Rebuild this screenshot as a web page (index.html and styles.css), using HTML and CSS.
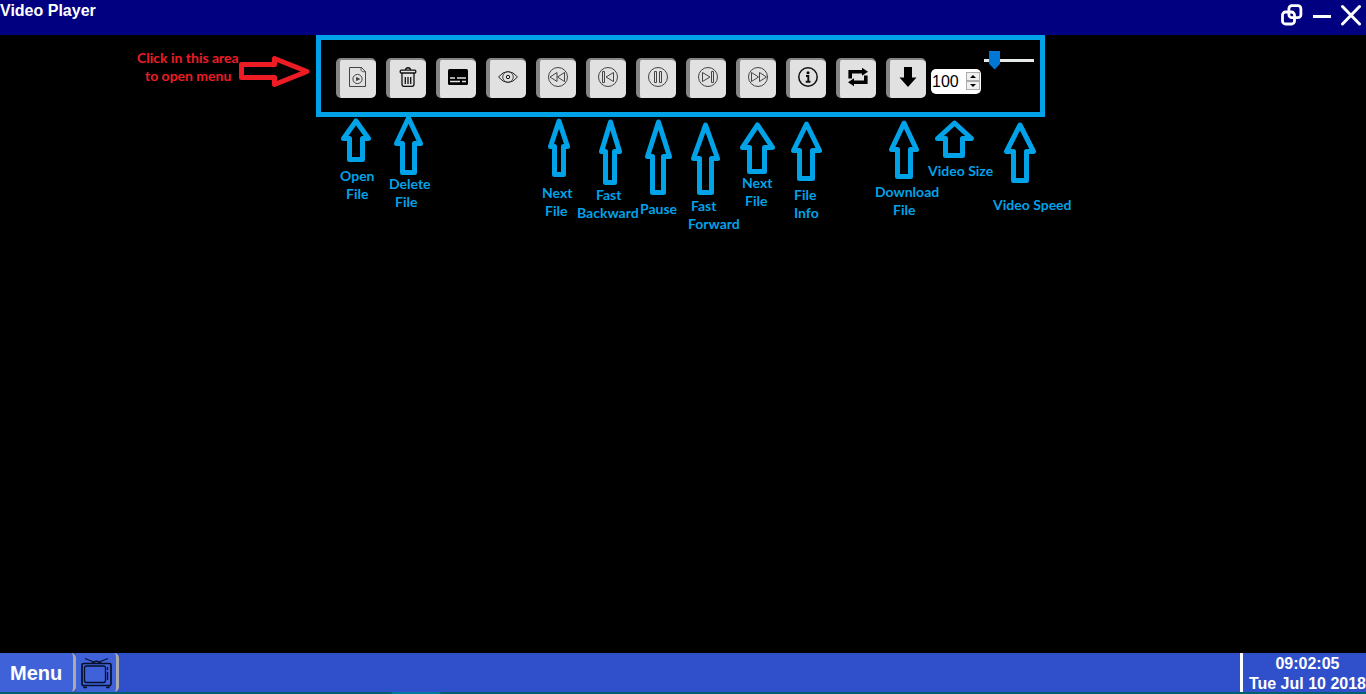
FILE: index.html
```html
<!DOCTYPE html>
<html lang="en">
<head>
<meta charset="utf-8">
<title>Video Player</title>
<link rel="stylesheet" href="styles.css">
</head>
<body>
<header class="titlebar">
  <h1 class="title">Video Player</h1>
  <div class="window-controls">
    <button class="window-button" aria-label="Restore"><svg width="22" height="22" viewBox="0 0 22 22" fill="none" stroke="#fff" stroke-width="2.8"><rect x="7.900" y="1.700" width="12" height="12" rx="3"/><rect x="1.500" y="8" width="12" height="12" rx="3"/></svg></button>
    <button class="window-button" aria-label="Minimize"><svg width="18" height="22" viewBox="0 0 18 22"><path d="M0 12.5h18" stroke="#fff" stroke-width="3"/></svg></button>
    <button class="window-button" aria-label="Close"><svg width="20" height="22" viewBox="0 0 20 22"><path d="M1.500 2.500 18.500 20M18.500 2.500 1.500 20" stroke="#fff" stroke-width="3" stroke-linecap="round"/></svg></button>
  </div>
</header>

<main class="stage">
  <div class="panel">
    <div class="toolbar">
      <div class="tools">
        <button class="tool" aria-label="Open file"><svg class="icon" viewBox="0 0 20 20"><path d="M1.500.5h12l4 4v15h-16zM13.500.5c-1.500 3 .5 5 4 4"/><circle cx="9.500" cy="12" r="4.600"/><path d="M8.500 10.500l3 1.500-3 1.500z" fill="#444"/></svg></button>
        <button class="tool" aria-label="Delete file"><svg class="icon dark" viewBox="0 0 20 20"><rect x="2.200" y="3.200" width="15.600" height="2.800" rx="1"/><path d="M7.500 3c0-3 5-3 5 0M4 6v11q0 2.300 2 2.300h8q2 0 2-2.300V6M7.300 10v7M10 10v7M12.700 10v7"/></svg></button>
        <button class="tool" aria-label="Subtitles"><svg class="icon" viewBox="0 0 20 20"><rect x="0" y="2" width="20" height="16" rx="1.500" fill="#000" stroke="none"/><path d="M2 11h5M9 11h9M2 14.500h10M14 14.500h4" stroke="#e1e1e1" stroke-width="1.700"/></svg></button>
        <button class="tool" aria-label="View"><svg class="icon" viewBox="0 0 20 20"><path d="M.5 10Q5 4.500 10 4.500T19.500 10Q15 15.500 10 15.500T.5 10z" stroke="#222"/><circle cx="10" cy="10" r="5.300"/><circle cx="10" cy="10" r="1.700" stroke="#111"/></svg></button>
        <button class="tool" aria-label="Previous file"><svg class="icon" viewBox="0 0 20 20"><circle cx="10" cy="10" r="9.500"/><path d="M9 5.500v9L2 10zM16.500 5.500v9L9.500 10z"/></svg></button>
        <button class="tool" aria-label="Fast backward"><svg class="icon" viewBox="0 0 20 20"><circle cx="10" cy="10" r="9.500"/><path d="M4.500 4.500h2v11h-2zM15.500 5.500v9L8 10z"/></svg></button>
        <button class="tool" aria-label="Pause"><svg class="icon" viewBox="0 0 20 20"><circle cx="10" cy="10" r="9.500"/><path d="M6.500 4.500h2v11h-2zM11.500 4.500h2v11h-2z"/></svg></button>
        <button class="tool" aria-label="Fast forward"><svg class="icon" viewBox="0 0 20 20"><circle cx="10" cy="10" r="9.500"/><path d="M13.500 4.500h2v11h-2zM4.500 5.500v9L12 10z"/></svg></button>
        <button class="tool" aria-label="Next file"><svg class="icon" viewBox="0 0 20 20"><circle cx="10" cy="10" r="9.500"/><path d="M3.500 5.500v9l7-4.500zM11.500 5.500v9l7-4.500z"/></svg></button>
        <button class="tool" aria-label="File info"><svg class="icon dark" viewBox="0 0 20 20"><circle cx="10" cy="10" r="9.200" stroke-width="1.500"/><path d="M8 9h2.300v5.500M7.700 14.700h4.800" stroke-width="1.900"/><circle cx="10" cy="5.700" r="1.500" fill="#000" stroke="none"/></svg></button>
        <button class="tool" aria-label="Repeat"><svg class="icon" viewBox="0 0 20 20"><path d="M2.200 11.500V4.700H15M17.800 8.500v6.800H5" fill="none" stroke="#000" stroke-width="3.600"/><path d="M14 .7l6 4-6 4zM6 11.300l-6 4 6 4z" fill="#000" stroke="none"/></svg></button>
        <button class="tool" aria-label="Download file"><svg class="icon" viewBox="0 0 20 20"><path d="M6 0h8v10.500h4.500L10 20 1.500 10.500H6z" fill="#000" stroke="none"/></svg></button>
      </div>
      <div class="size-field">
        <input class="size-input" type="number" value="100" aria-label="Video size">
        <span class="spinner">
          <button class="spin" aria-label="Increase"><svg width="6" height="3" viewBox="0 0 6 3"><path d="M0 3l3-3 3 3z"/></svg></button>
          <button class="spin" aria-label="Decrease"><svg width="6" height="3" viewBox="0 0 6 3"><path d="M0 0l3 3 3-3z"/></svg></button>
        </span>
      </div>
      <input class="speed" type="range" min="0" max="100" value="13" aria-label="Video speed">
    </div>

    <svg class="callouts" width="944" height="200" viewBox="136 35 944 200">
      <g class="arrows">
        <path d="M356 121 368.500 138.500H362.500V159.500H349.500V138.500H343.500Z"/>
        <path d="M408.500 118 420.500 143.500H414.500V172.500H402.500V143.500H396.500Z"/>
        <path d="M559 121 567.500 146.500H563.500V174.500H554.500V146.500H550.500Z"/>
        <path d="M610.500 122 619.500 151.500H614.500V182.500H605.500V151.500H601.500Z"/>
        <path d="M658.500 122 669.500 156.500H663.500V192.500H652.500V156.500H647.500Z"/>
        <path d="M705.500 125 717.500 158.500H711.500V192.500H699.500V158.500H693.500Z"/>
        <path d="M757.500 125 772.500 147.500H764.500V171.500H749.500V147.500H742.500Z"/>
        <path d="M806.500 124 819.500 150.500H812.500V178.500H799.500V150.500H793.500Z"/>
        <path d="M904 123 916.500 149.500H910.500V176.500H897.500V149.500H891.500Z"/>
        <path d="M954.500 123 971.500 138.500H962.500V155.500H945.500V138.500H937.500Z"/>
        <path d="M1020 125 1033.500 151.500H1026.500V180.500H1013.500V151.500H1006.500Z"/>
        <path class="red-line" d="M241.500 64.500H274.500V58.500L307 71.500 274.500 84.500V77.500H241.500Z"/>
      </g>
      <g class="notes">
        <text class="red-note"><tspan x="137" y="63">Click in this area</tspan> <tspan x="145" y="81">to open menu</tspan></text>
        <text><tspan x="340" y="181">Open</tspan> <tspan x="346" y="199">File</tspan></text>
        <text><tspan x="389" y="189">Delete</tspan> <tspan x="395" y="207">File</tspan></text>
        <text><tspan x="542" y="198">Next</tspan> <tspan x="545" y="216">File</tspan></text>
        <text><tspan x="596" y="200">Fast</tspan> <tspan x="577" y="218">Backward</tspan></text>
        <text x="640" y="214">Pause</text>
        <text><tspan x="691" y="211">Fast</tspan> <tspan x="688" y="229">Forward</tspan></text>
        <text><tspan x="742" y="188">Next</tspan> <tspan x="745" y="206">File</tspan></text>
        <text><tspan x="794" y="200">File</tspan> <tspan x="794" y="218">Info</tspan></text>
        <text><tspan x="875" y="197">Download</tspan> <tspan x="893" y="215">File</tspan></text>
        <text x="928" y="176">Video Size</text>
        <text x="993" y="210">Video Speed</text>
      </g>
    </svg>
  </div>
</main>

<footer class="taskbar">
  <button class="task menu-button">Menu</button>
  <button class="task" aria-label="Video Player"><svg width="32" height="32" viewBox="0 0 32 32" fill="none" stroke="#07102c" stroke-width="1.300"><rect x="1" y="6.500" width="29" height="22" rx="1.500" stroke-width="1.700"/><rect x="3.500" y="9" width="21" height="16.500" rx="2"/><path d="M26.500 10v3M26.500 15v8M3 29v1.500h3M28 29v1.500h-3M4 1.500l10 4M27 1.500l-10 4M11 6q4.500-3.500 9 0"/></svg></button>
  <div class="clock"><time>09:02:05</time><time>Tue Jul 10 2018</time></div>
</footer>
</body>
</html>
```
FILE: styles.css
```css
* { box-sizing: border-box; }

body {
  margin: 0;
  min-height: 100vh;
  display: flex;
  flex-direction: column;
  background: #000;
  font-family: "Liberation Sans", Arial, sans-serif;
}

button { font: inherit; }

.titlebar {
  display: flex;
  justify-content: space-between;
  height: 35px;
  background: #000080;
  color: #fff;
}

.title {
  margin: 0;
  font-size: 16px;
  line-height: 22px;
}

.window-controls {
  display: flex;
  align-items: flex-start;
  gap: 10px;
  padding: 4px 5px 0 0;
}

.window-button {
  display: flex;
  padding: 0;
  border: 0;
  background: none;
}

.stage {
  flex: 1;
  display: flex;
  justify-content: center;
  align-items: flex-start;
  padding-right: 5px;
}

.panel { position: relative; }

.toolbar {
  display: flex;
  align-items: flex-start;
  padding: 10px 6px 14px 15px;
  border: 5px solid #00a2e8;
}

.tools {
  display: flex;
  gap: 10px;
  padding-top: 8px;
}

.tool {
  display: flex;
  justify-content: center;
  align-items: center;
  width: 40px;
  height: 40px;
  padding: 0 0 4px;
  border: 0 solid #858585;
  border-width: 2px 0 0 4px;
  border-radius: 5px;
  background: #e1e1e1;
}

.icon {
  width: 20px;
  height: 20px;
  fill: none;
  stroke: #444;
  stroke-width: 1;
}

.dark {
  stroke: #111;
  stroke-width: 1.3;
}

.size-field {
  display: flex;
  width: 50px;
  height: 25px;
  margin: 19px 3px 0 5px;
  padding-right: 1px;
  border-radius: 5px;
  background: #fff;
  overflow: hidden;
}

.size-input {
  flex: 1;
  min-width: 0;
  padding: 0 0 0 1px;
  border: 0;
  background: none;
  color: #000;
  font: 16px "Liberation Sans", Arial, sans-serif;
  appearance: textfield;
}

.size-input::-webkit-inner-spin-button { appearance: none; }

.spinner {
  display: flex;
  flex-direction: column;
  width: 14px;
  padding: 3px 0 4px;
}

.spin {
  flex: 1;
  display: flex;
  justify-content: center;
  align-items: center;
  min-height: 0;
  padding: 0;
  border: 1px solid #adadad;
  background: #f0f0f0;
}

.speed {
  width: 50px;
  height: 20px;
  margin: 0;
  appearance: none;
  background: none;
}

.speed::-webkit-slider-runnable-track {
  height: 3px;
  background: #e7eaea;
}

.speed::-webkit-slider-thumb {
  appearance: none;
  width: 11px;
  height: 19px;
  margin-top: -8px;
  background: #0078d7;
  clip-path: polygon(0 0, 100% 0, 100% 70%, 50% 100%, 0 70%);
}

.callouts {
  position: absolute;
  top: 0;
  left: -180px;
  pointer-events: none;
}

.arrows {
  fill: none;
  stroke: #00a2e8;
  stroke-width: 5;
  stroke-linejoin: round;
}

.arrows .red-line { stroke: #ed1c24; }

.notes {
  fill: #00a2e8;
  font: bold 14px Lato, sans-serif;
}

.notes .red-note { fill: #ed1c24; }

.taskbar {
  display: flex;
  height: 41px;
  padding-bottom: 2px;
  background:
    linear-gradient(#007ba0, #007ba0) 392px 100% / 48px 2px no-repeat,
    linear-gradient(#006070, #006070) 0 100% / 100% 2px no-repeat,
    #304fcb;
  color: #fff;
}

.task {
  display: flex;
  align-items: center;
  padding: 0 3px 0 5px;
  border: 0;
  border-right: 3px solid #aaa;
  border-radius: 0 5px 5px 0;
  background: #4062d9;
  color: #fff;
}

.menu-button {
  padding: 2px 11px 0 10px;
  font-size: 20px;
  font-weight: bold;
}

.clock {
  display: flex;
  flex-direction: column;
  align-items: center;
  margin-left: auto;
  padding: 1px 0 0 6px;
  border-left: 3px solid #fff;
  font-size: 16px;
  font-weight: bold;
  line-height: 20px;
}
```
